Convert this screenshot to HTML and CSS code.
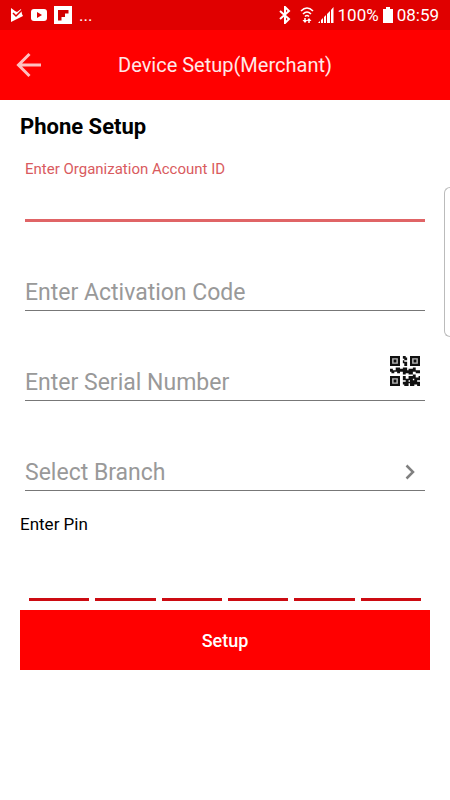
FILE: index.html
```html
<!DOCTYPE html>
<html lang="en">
<head>
<meta charset="utf-8">
<meta name="viewport" content="width=device-width, initial-scale=1">
<title>Device Setup</title>
<link rel="stylesheet" href="styles.css">
</head>
<body>
<div class="status">
  <div class="status-group">
    <svg width="14" height="16" viewBox="0 0 14 16" aria-hidden="true"><path d="M1 1l4 3 2 1 4-3 1 5 1 2L1 15z" fill="#fff"/><path d="M3 6l3 3 6-6" fill="none" stroke="#e00000" stroke-width="1.500"/></svg>
    <svg width="16" height="12" viewBox="0 0 16 12" aria-hidden="true"><rect width="16" height="12" rx="3" fill="#fff"/><path d="M6 3l5 3-5 3z" fill="#e00000"/></svg>
    <svg width="18" height="18" viewBox="0 0 18 18" aria-hidden="true"><path d="M0 0h18v18H0z" fill="#fff"/><path d="M4 4h10.500v3.500h-3.500v3.500H7.500v3.500H4z" fill="#d00000"/></svg>
    <span class="more">...</span>
  </div>
  <div class="status-group status-right">
    <svg width="12" height="18" viewBox="0 0 12 18" aria-hidden="true"><path d="M1 5l9 8-4 4V1l4 4-9 8" fill="none" stroke="#fff" stroke-width="2"/></svg>
    <svg class="wifi" width="14" height="18" viewBox="0 0 14 18" aria-hidden="true"><path d="M1 5q6-6 12 0M3 8q4-4 8 0M5 10.500q2-2 4 0" fill="none" stroke="#fff" stroke-width="1.600"/><path d="M5 12v4M9 17v-4" stroke="#fff" stroke-width="1.500"/><path d="M2.500 14h5L5 17zM6.500 15h5L9 12z" fill="#fff"/></svg>
    <svg width="16" height="16" viewBox="0 0 16 16" aria-hidden="true"><path d="M0 16l2-2v2zM3 13l2-2v5H3zM6 10l2-2v8H6zM9 7l3-3v12H9zM13 3l2.500-3v16H13z" fill="#fff"/></svg>
    <span>100%</span>
    <svg width="10" height="16" viewBox="0 0 10 16" aria-hidden="true"><path d="M3 0h4v2h3v14H0V2h3z" fill="#fff"/></svg>
    <span>08:59</span>
  </div>
</div>
<header class="bar">
  <button class="back" type="button" aria-label="Back">
    <svg width="26" height="26" viewBox="0 0 26 26" aria-hidden="true"><path d="M13.500 2L2.500 13l11 11M2.500 13H25" fill="none" stroke="#ffc0c0" stroke-width="3"/></svg>
  </button>
  <h1 class="title">Device Setup(Merchant)</h1>
</header>
<main class="content">
  <h2 class="heading">Phone Setup</h2>
  <form>
    <div class="fields">
      <div class="field-active">
        <label for="org">Enter Organization Account ID</label>
        <input id="org" type="text">
      </div>
      <div class="field">
        <input type="text" aria-label="Enter Activation Code" placeholder="Enter Activation Code">
      </div>
      <div class="field">
        <input type="text" aria-label="Enter Serial Number" placeholder="Enter Serial Number">
        <button class="scan" type="button" aria-label="Scan QR code">
          <svg width="30" height="30" viewBox="0 0 21 21" aria-hidden="true"><path d="M0 0h7v7H0zM14 0h7v7h-7zM0 14h7v7H0z" fill="#111"/><path d="M2 2h3v3H2zM16 2h3v3h-3zM2 16h3v3H2z" fill="none" stroke="#bbb" stroke-width="1"/><path d="M9 0h2v1h1v2h-2v1h2v3h-2V5H9V3h1V2H9zM0 9h2v1h2V8h3v1h2V8h3v2h1V9h3V8h2v2h3v2h-3v-1h-2v2h-3v-1h-2v1H9v-2H7v1H5v-1H3v1H1v-1H0zM9 14h2v2h2v-2h3v-1h2v2h2v-1h1v3h-2v1h2v3h-2v-1h-2v1h-3v-2h-1v2h-3v-1H9v-2h2v-1H9z" fill="#111"/><path d="M13 17h1v1h-1zM16 16h1v1h-1z" fill="#fff"/></svg>
        </button>
      </div>
      <div class="field">
        <select aria-label="Select Branch"><option>Select Branch</option></select>
        <svg class="chevron" width="10" height="16" viewBox="0 0 10 16" aria-hidden="true"><path d="M1.500 1.500L8 8l-6.500 6.500" fill="none" stroke="#808080" stroke-width="2.500"/></svg>
      </div>
    </div>
    <p class="pin-label" id="pin-label">Enter Pin</p>
    <div class="pins" role="group" aria-labelledby="pin-label">
      <input type="password" maxlength="1" aria-label="Digit 1">
      <input type="password" maxlength="1" aria-label="Digit 2">
      <input type="password" maxlength="1" aria-label="Digit 3">
      <input type="password" maxlength="1" aria-label="Digit 4">
      <input type="password" maxlength="1" aria-label="Digit 5">
      <input type="password" maxlength="1" aria-label="Digit 6">
    </div>
    <button class="submit" type="submit">Setup</button>
  </form>
</main>
<div class="edge-handle"></div>
</body>
</html>
```

FILE: styles.css
```css
* { box-sizing: border-box; }
body {
  margin: 0;
  background: #fff;
  color: #000;
  font-family: Roboto, "Liberation Sans", sans-serif;
}
input, select, button {
  font: inherit;
  margin: 0;
  padding: 0;
  border: 0;
  border-radius: 0;
  background: transparent;
  outline: 0;
}
svg { display: block; flex: none; }

.status {
  display: flex;
  justify-content: space-between;
  align-items: center;
  height: 30px;
  padding: 0 11px 0 10px;
  background: #e00000;
  color: #fff;
  font-size: 17px;
}
.status-group { display: flex; align-items: center; gap: 7px; }
.status-right { gap: 4px; }
.wifi { margin-left: 5px; }

.bar {
  display: grid;
  grid-template-columns: 58px 1fr 58px;
  align-items: center;
  height: 70px;
  background: #f00;
}
.back { padding: 0 16px; }
.title {
  margin: 0;
  color: #ffe8e8;
  font-size: 20px;
  font-weight: 400;
  line-height: 24px;
  text-align: center;
}

.content { padding: 0 20px; }
.heading {
  margin: 0;
  font-size: 22px;
  font-weight: 700;
  line-height: 54px;
}
.fields { padding: 0 5px; }
.field-active label {
  display: block;
  color: #d95b5e;
  font-size: 15px;
  line-height: 31px;
}
.field-active input {
  display: block;
  width: 100%;
  height: 37px;
  border-bottom: 3px solid #e06466;
}
.field {
  display: flex;
  align-items: flex-end;
  height: 90px;
  border-bottom: 1px solid #777;
  font-size: 23px;
}
.field:first-of-type { margin-top: 0; }
.field-active + .field { height: 89px; }
.field input, .field select {
  flex: 1;
  min-width: 0;
  height: 36px;
  color: #999;
  appearance: none;
}
.field input::placeholder { color: #999; opacity: 1; }
.scan { padding: 0 5px 14px; }
.chevron { margin: 0 10px 10px; }

.pin-label {
  margin: 0;
  padding-top: 21px;
  font-size: 17px;
  line-height: 24px;
}
.pins {
  display: grid;
  grid-template-columns: repeat(6, 1fr);
  gap: 6px;
  padding: 0 9px 9px;
}
.pins input {
  width: 100%;
  height: 65px;
  border-bottom: 3px solid #cc0b12;
  text-align: center;
}
.submit {
  display: block;
  width: 100%;
  height: 60px;
  background: #f00;
  color: #fff;
  font-size: 18px;
  font-weight: 500;
}
.edge-handle {
  position: absolute;
  top: 187px;
  right: 0;
  width: 6px;
  height: 150px;
  border: 1px solid #bbb;
  border-right: 0;
  border-radius: 6px 0 0 6px;
}
```
